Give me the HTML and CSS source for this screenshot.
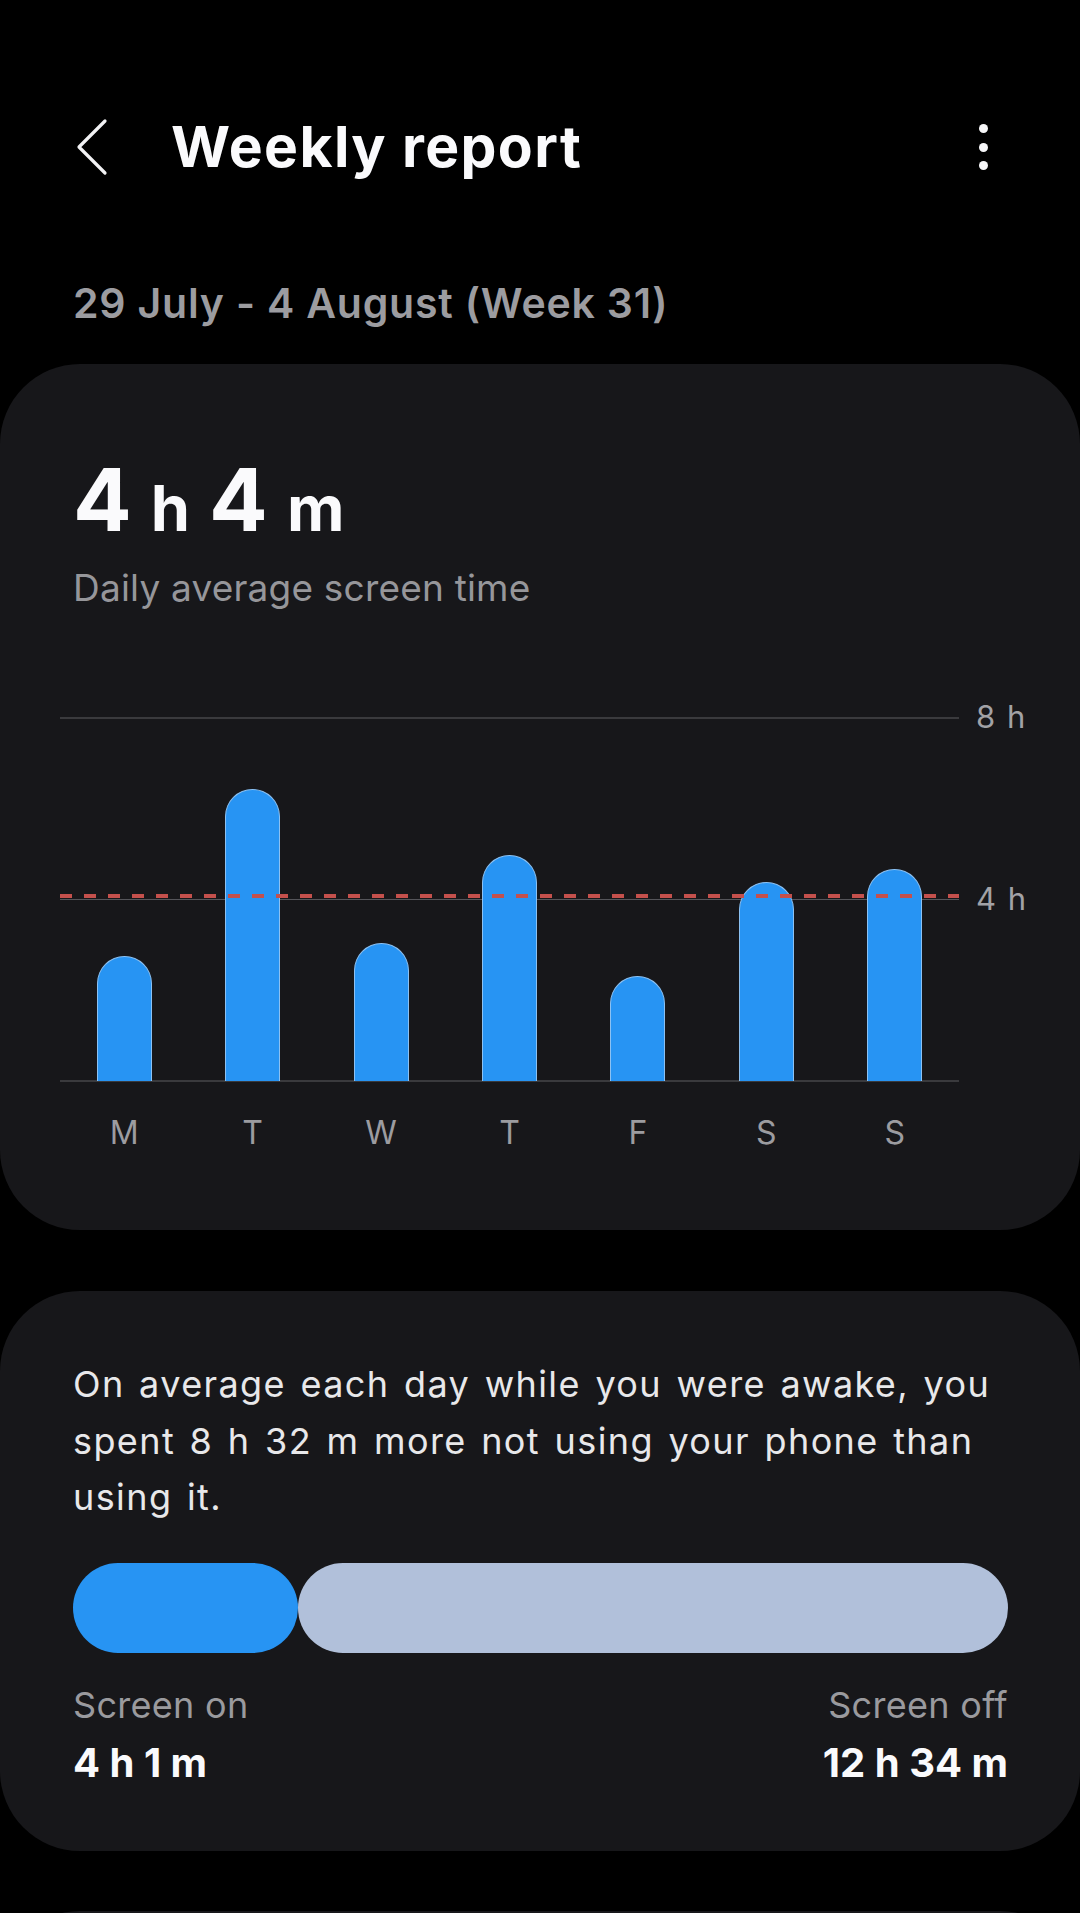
FILE: index.html
```html
<!DOCTYPE html>
<html lang="en">
<head>
    <meta charset="UTF-8">
    <meta name="viewport" content="width=device-width, initial-scale=1.0">
    <title>Weekly report</title>
    <link rel="stylesheet" href="styles.css">
</head>
<body>
    <div id="screen">
        <header class="topbar">
            <button class="back" aria-label="Back">
                <svg width="60" height="60" viewBox="0 0 60 60">
                    <path d="M45 4 L19 30 L45 56" fill="none" stroke="#f2f2f4" stroke-width="3.2" stroke-linecap="round" stroke-linejoin="round"/>
                </svg>
            </button>
            <h1 class="title">Weekly report</h1>
            <button class="more" aria-label="More options">
                <span></span><span></span><span></span>
            </button>
        </header>

        <p class="range">29 July - 4 August (Week 31)</p>

        <section class="card summary">
            <div class="total">
                <span class="num">4</span><span class="unit">h</span>
                <span class="num">4</span><span class="unit">m</span>
            </div>
            <p class="caption">Daily average screen time</p>

            <div class="plot">
                <div class="grid top"><span class="tick">8 h</span></div>
                <div class="grid mid"><span class="tick">4 h</span></div>
                <div class="grid base"></div>
                <div class="bars">
                    <div class="day"><div class="bar" style="height: 125px"></div></div>
                    <div class="day"><div class="bar" style="height: 292px"></div></div>
                    <div class="day"><div class="bar" style="height: 138px"></div></div>
                    <div class="day"><div class="bar" style="height: 226px"></div></div>
                    <div class="day"><div class="bar" style="height: 105px"></div></div>
                    <div class="day"><div class="bar" style="height: 199px"></div></div>
                    <div class="day"><div class="bar" style="height: 212px"></div></div>
                </div>
                <div class="average"></div>
            </div>
            <div class="days">
                <span>M</span><span>T</span><span>W</span><span>T</span><span>F</span><span>S</span><span>S</span>
            </div>
        </section>

        <section class="card awake">
            <p class="note">On average each day while you were awake, you spent 8 h 32 m more not using your phone than using it.</p>
            <div class="split">
                <div class="on" style="width: 225px"></div>
                <div class="off"></div>
            </div>
            <div class="legend">
                <div>
                    <div class="label">Screen on</div>
                    <div class="value">4 h 1 m</div>
                </div>
                <div class="right">
                    <div class="label">Screen off</div>
                    <div class="value">12 h 34 m</div>
                </div>
            </div>
        </section>

        <section class="card next"></section>
    </div>
</body>
</html>
```

FILE: styles.css
```css
body {
    margin: 0;
    background-color: #000;
    font-family: Inter, "Noto Sans", sans-serif;
    color: #fafafc;
}
#screen {
    width: 1080px;
    height: 1913px;
    overflow: hidden;
}
p {
    margin: 0;
}
button {
    background: none;
    border: none;
    padding: 0;
    cursor: pointer;
}

/* header */
.topbar {
    display: flex;
    align-items: center;
    height: 88px;
    padding: 103px 77px 0 60px;
}
.back {
    width: 60px;
    height: 60px;
    display: flex;
}
.title {
    flex: 1;
    margin: 0 0 0 51px;
    font-size: 57px;
    line-height: 88px;
    font-weight: 700;
    letter-spacing: 1.4px;
}
.more {
    width: 40px;
    display: flex;
    flex-direction: column;
    align-items: center;
    gap: 9.5px;
}
.more span {
    width: 9px;
    height: 9px;
    border-radius: 50%;
    background-color: #f6f6f8;
}

.range {
    margin: 82px 0 0 73px;
    font-size: 41px;
    line-height: 60px;
    font-weight: 600;
    letter-spacing: 0.8px;
    color: #9c9ca0;
}

/* cards */
.card {
    background-color: #17171a;
    border-radius: 80px;
    padding: 0 72px 0 73px;
}
.summary {
    margin-top: 31px;
    height: 866px;
    padding-top: 86px;
    box-sizing: border-box;
}
.total {
    display: flex;
    align-items: baseline;
    gap: 19px;
    height: 100px;
    line-height: 100px;
    font-weight: 700;
}
.total .num {
    font-size: 87px;
}
.total .unit {
    font-size: 63px;
}
.caption {
    margin-top: 13px;
    font-size: 37px;
    line-height: 50px;
    letter-spacing: 0.2px;
    color: #96969a;
}

/* chart */
.plot {
    position: relative;
    width: 899px;
    height: 364px;
    margin: 104px 0 0 -13px;
}
.grid {
    position: absolute;
    left: 0;
    right: 0;
    height: 1px;
    background-color: #3a3a3d;
}
.grid.top {
    top: 0;
    height: 2px;
}
.grid.mid {
    top: 182px;
    background-color: #55555a;
}
.grid.base {
    top: 363px;
    height: 2px;
}
.tick {
    position: absolute;
    left: 916px;
    top: -20px;
    font-size: 31px;
    line-height: 40px;
    letter-spacing: 1.5px;
    color: #a2a2a6;
    white-space: nowrap;
}
.bars {
    position: relative;
    display: flex;
    align-items: flex-end;
    height: 100%;
}
.day {
    flex: 1;
    display: flex;
    justify-content: center;
}
.bar {
    width: 55px;
    box-sizing: border-box;
    background-color: #2794f3;
    border: 1.5px solid #8cc1f2;
    border-bottom: none;
    border-radius: 28px 28px 0 0;
}
.average {
    position: absolute;
    left: 0;
    right: 0;
    top: 177px;
    height: 4px;
    background: repeating-linear-gradient(to right, #c4504c 0 12px, transparent 12px 24px);
}
.days {
    display: flex;
    width: 899px;
    margin: 32px 0 0 -13px;
    font-size: 32px;
    line-height: 40px;
    color: #9c9ca0;
}
.days span {
    flex: 1;
    text-align: center;
}

/* awake card */
.awake {
    margin-top: 61px;
    padding-top: 65px;
    padding-bottom: 62px;
}
.note {
    font-size: 36px;
    line-height: 56.5px;
    letter-spacing: 1.4px;
    word-spacing: 3px;
    color: #e8e8ea;
}
.split {
    display: flex;
    height: 90px;
    margin-top: 37px;
}
.on {
    border-radius: 45px;
    background-color: #2794f3;
}
.off {
    flex: 1;
    border-radius: 45px;
    background-color: #b1c0da;
}
.legend {
    display: flex;
    justify-content: space-between;
    margin-top: 28px;
}
.legend .right {
    text-align: right;
}
.label {
    font-size: 36px;
    line-height: 48px;
    letter-spacing: 0.3px;
    color: #9a9a9e;
}
.value {
    margin-top: 8px;
    font-size: 40px;
    line-height: 52px;
    font-weight: 700;
}

.next {
    margin-top: 60px;
    height: 200px;
}
```
